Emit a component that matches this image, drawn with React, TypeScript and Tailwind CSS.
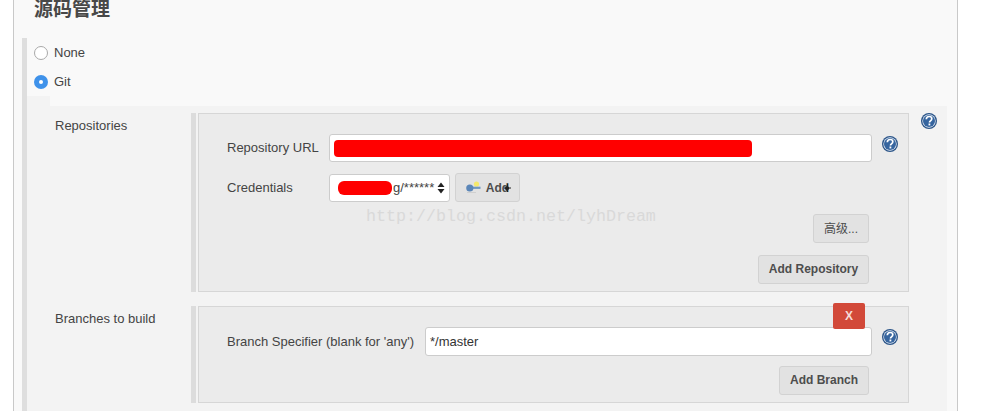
const sans = "font-['Liberation_Sans','Noto_Sans_CJK_SC',sans-serif]";

function Help({ className = "" }: { className?: string }) {
  return (
    <svg width="16" height="16" viewBox="0 0 16 16" className={"shrink-0 " + className}>
      <circle cx="8" cy="8" r="8" fill="#2a5488" />
      <circle cx="8" cy="8" r="6.7" fill="#e6ecf4" />
      <circle cx="8" cy="8" r="6" fill="#36659f" />
      <path d="M5.3 6.2C5.4 4.4 6.7 3.5 8.1 3.5c1.6 0 2.7 1 2.7 2.3 0 1.1-.7 1.7-1.4 2.1-.7.4-.9.8-.9 1.5" fill="none" stroke="#ffffff" strokeWidth="1.7" />
      <rect x="7.5" y="10.5" width="1.8" height="1.9" fill="#ffffff" />
    </svg>
  );
}

function Btn({ children, className = "" }: { children: React.ReactNode; className?: string }) {
  return (
    <div className={"h-[29px] flex items-center justify-center rounded-[3px] border border-[#d2d2d2] bg-[#e2e2e2] text-[12px] font-bold text-[#4d4d4d] " + className}>
      {children}
    </div>
  );
}

function Bar() {
  return <div className="w-[5px] shrink-0 bg-[#dcdcdc]" />;
}

export default function App() {
  return (
    <div className={"relative h-[411px] w-[1003px] overflow-hidden bg-white text-[13px] text-[#444444] " + sans}>
      <div className="ml-[13px] flex h-full w-[945px] flex-col border-x border-[#c9c9c9] bg-[#f9f9f9]">
        <div className="h-[38px] pl-[20px] text-[19px] font-bold leading-[19px] text-[#484848]">源码管理</div>
        <div className="ml-[8px] mr-[10px] flex flex-1 flex-col border-l-[5px] border-[#dedede]">
          <div className="flex h-[29px] items-center gap-[6px] pl-[7px]">
            <div className="h-[14px] w-[14px] rounded-full border border-[#a9a9a9] bg-white" />
            <span>None</span>
          </div>
          <div className="flex h-[29px] items-center gap-[6px] pl-[7px]">
            <div className="flex h-[14px] w-[14px] items-center justify-center rounded-full bg-[#3f92ea]">
              <div className="h-[4px] w-[4px] rounded-full bg-white" />
            </div>
            <span>Git</span>
          </div>
          <div className="h-[10px] w-[23px] bg-[#f3f3f3]" />
          <div className="flex-1 bg-[#f3f3f3] pt-[7px]">
            <div className="flex h-[179px]">
              <div className="w-[164px] pl-[28px] pt-[5px] leading-[15px]">Repositories</div>
              <Bar />
              <div className="ml-[2px] flex flex-1 flex-col border border-[#d6d6d6] bg-[#ebebeb] pt-[20px]">
                <div className="flex items-center pl-[28px]">
                  <div className="w-[102px]">Repository URL</div>
                  <div className="flex h-[28px] w-[543px] items-center rounded-[3px] border border-[#cccccc] bg-white pl-[4px]">
                    <div className="h-[17px] w-[418px] rounded-[4px] bg-[#ff0000]" />
                  </div>
                  <Help className="ml-[10px] -mt-[8px]" />
                </div>
                <div className="mt-[11px] flex items-center pl-[28px]">
                  <div className="w-[102px]">Credentials</div>
                  <div className="flex h-[28px] w-[121px] items-center rounded-[3px] border border-[#cccccc] bg-white pl-[8px]">
                    <div className="h-[14px] w-[54px] rounded-[6px] bg-[#ff0000]" />
                    <span className="ml-px text-[13px]">g/******</span>
                    <svg width="8" height="12" viewBox="0 0 8 12" className="ml-[3px]">
                      <path d="M4 0.5 7.5 5H.5zM4 11.5.5 7h7z" fill="#222222" />
                    </svg>
                  </div>
                  <Btn className="ml-[5px] w-[65px] gap-[5px]">
                    <svg width="15" height="13" viewBox="0 0 15 13">
                      <circle cx="10.5" cy="3" r="2.6" fill="#f5e96a" />
                      <path d="M5 5.7h9.5v2.2H5z" fill="#6f97bf" />
                      <circle cx="3.8" cy="7" r="3.6" fill="#5b86b8" />
                      <path d="M1 11.5h9" stroke="#cfcfcf" />
                    </svg>
                    <span>Add</span>
                  </Btn>
                  <svg width="7" height="8" viewBox="0 0 7 8" className="-ml-[16px]">
                    <path d="M3.5 0v8M0 4h7" stroke="#222222" strokeWidth="1.2" />
                    <circle cx="3" cy="4.3" r="2.1" fill="#222222" />
                  </svg>
                </div>
                <div className="mt-[12px] flex justify-end pr-[39px]">
                  <Btn className="w-[56px]"><span className="font-normal">高级...</span></Btn>
                </div>
                <div className="mt-[12px] flex justify-end pr-[39px]">
                  <Btn className="w-[111px] pb-[2px]">Add Repository</Btn>
                </div>
              </div>
              <div className="w-[38px] pl-[12px]"><Help /></div>
            </div>
            <div className="mt-[14px] flex h-[97px]">
              <div className="w-[164px] pl-[28px] pt-[5px] leading-[15px]">Branches to build</div>
              <Bar />
              <div className="relative ml-[2px] flex flex-1 flex-col border border-[#d6d6d6] bg-[#ebebeb] pt-[20px]">
                <div className="flex items-center pl-[28px]">
                  <div className="w-[198px]">Branch Specifier (blank for 'any')</div>
                  <div className="flex h-[29px] w-[447px] items-center rounded-[3px] border border-[#cccccc] bg-white pl-[4px] text-[#333333]">*/master</div>
                  <Help className="ml-[10px] -mt-[9px]" />
                </div>
                <div className="mt-[10px] flex justify-end pr-[39px]">
                  <Btn className="w-[90px] pb-[2px]">Add Branch</Btn>
                </div>
                <div className="absolute -top-[4px] right-[43px] flex h-[26px] w-[32px] items-center justify-center rounded-[2px] bg-[#d24939] text-[12px] font-bold text-[#f6dcd8]">X</div>
              </div>
              <div className="w-[38px]" />
            </div>
          </div>
        </div>
      </div>
      <div className="absolute left-[366px] top-[207px] font-['Liberation_Mono',monospace] text-[16.67px] leading-[20px] text-[#d9d9d9]">http://blog.csdn.net/lyhDream</div>
    </div>
  );
}
